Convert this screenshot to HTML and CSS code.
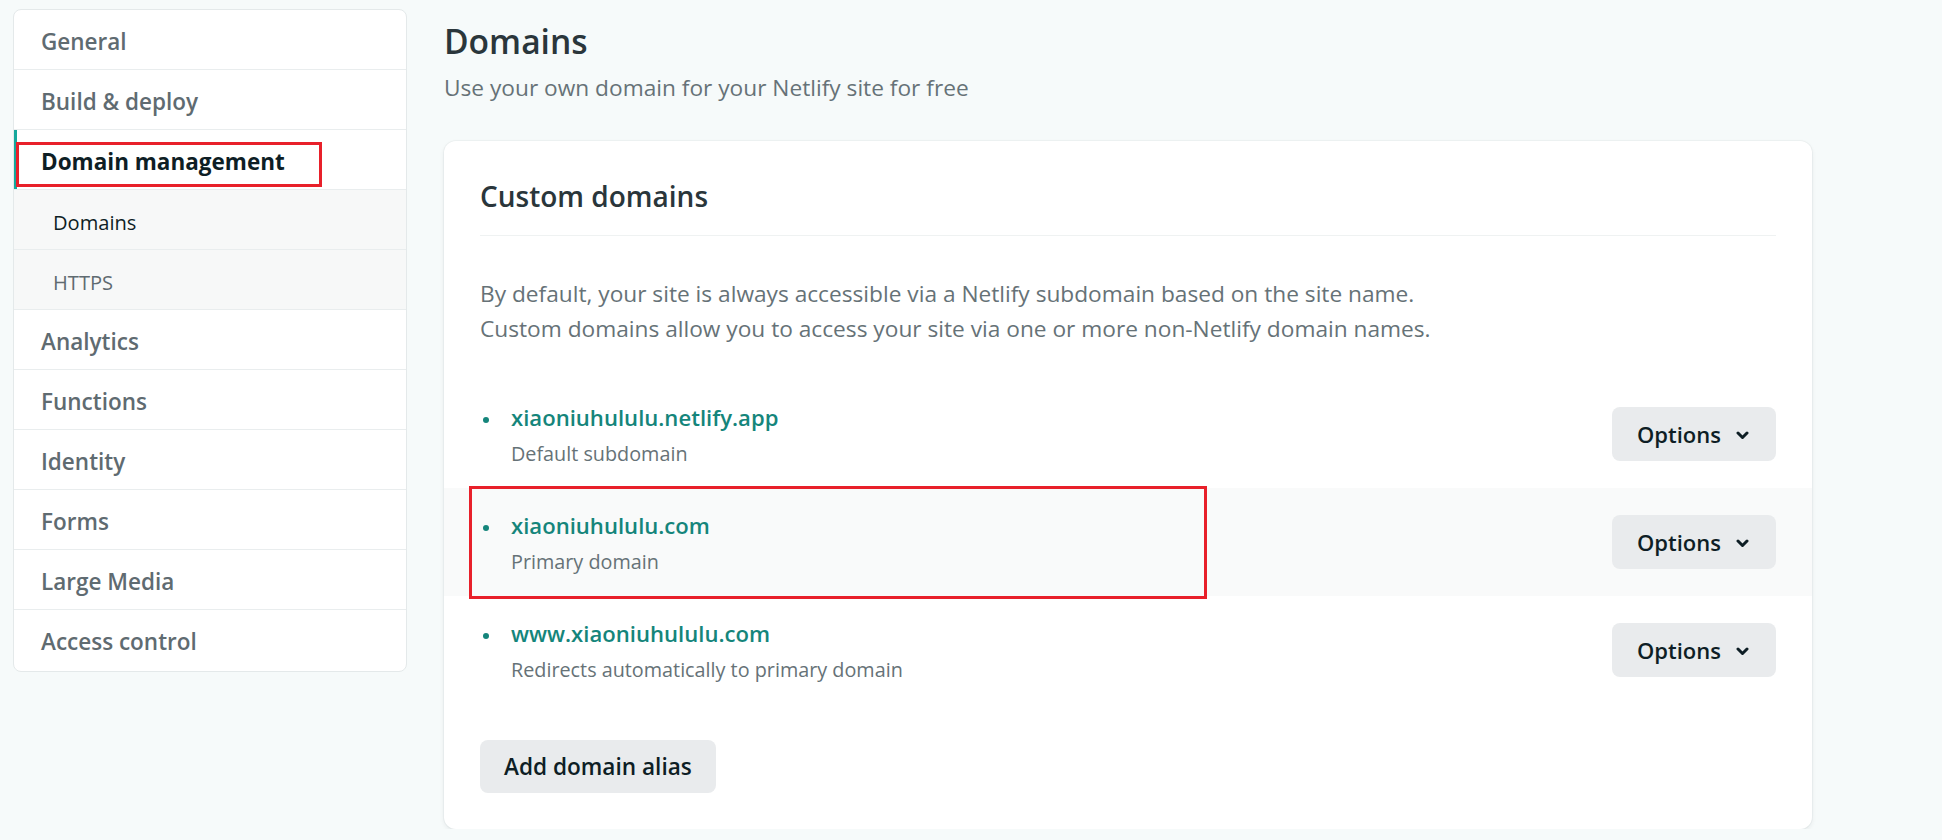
FILE: index.html
```html
<!DOCTYPE html>
<html lang="en">
<head>
<meta charset="utf-8">
<title>Domain management</title>
<link rel="stylesheet" href="styles.css">
</head>
<body>
<div class="page">
  <nav class="sidebar">
    <a class="nav-item">General</a>
    <a class="nav-item">Build &amp; deploy</a>
    <a class="nav-item active">Domain management<span class="mark mark-nav"></span></a>
    <a class="nav-item sub current">Domains</a>
    <a class="nav-item sub">HTTPS</a>
    <a class="nav-item">Analytics</a>
    <a class="nav-item">Functions</a>
    <a class="nav-item">Identity</a>
    <a class="nav-item">Forms</a>
    <a class="nav-item">Large Media</a>
    <a class="nav-item last">Access control</a>
  </nav>

  <main class="main">
    <h1 class="title">Domains</h1>
    <p class="subtitle">Use your own domain for your Netlify site for free</p>

    <section class="card">
      <h2 class="card-title">Custom domains</h2>
      <p class="card-desc">By default, your site is always accessible via a Netlify subdomain based on the site name.<br>Custom domains allow you to access your site via one or more non-Netlify domain names.</p>

      <ul class="domains">
        <li class="domain">
          <div class="domain-info">
            <span class="dot"></span>
            <div class="domain-text">
              <div class="domain-name">xiaoniuhululu.netlify.app</div>
              <div class="domain-note">Default subdomain</div>
            </div>
          </div>
          <button class="btn btn-options">Options <svg class="chev" width="13" height="9" viewBox="0 0 13 9"><path d="M2 2 L6.5 6.5 L11 2" fill="none" stroke="currentColor" stroke-width="3" stroke-linecap="round" stroke-linejoin="round"/></svg></button>
        </li>
        <li class="domain highlight">
          <div class="domain-info">
            <span class="dot"></span>
            <div class="domain-text">
              <div class="domain-name">xiaoniuhululu.com</div>
              <div class="domain-note">Primary domain</div>
            </div>
          </div>
          <button class="btn btn-options">Options <svg class="chev" width="13" height="9" viewBox="0 0 13 9"><path d="M2 2 L6.5 6.5 L11 2" fill="none" stroke="currentColor" stroke-width="3" stroke-linecap="round" stroke-linejoin="round"/></svg></button>
          <span class="mark mark-row"></span>
        </li>
        <li class="domain">
          <div class="domain-info">
            <span class="dot"></span>
            <div class="domain-text">
              <div class="domain-name">www.xiaoniuhululu.com</div>
              <div class="domain-note">Redirects automatically to primary domain</div>
            </div>
          </div>
          <button class="btn btn-options">Options <svg class="chev" width="13" height="9" viewBox="0 0 13 9"><path d="M2 2 L6.5 6.5 L11 2" fill="none" stroke="currentColor" stroke-width="3" stroke-linecap="round" stroke-linejoin="round"/></svg></button>
        </li>
      </ul>

      <button class="btn btn-add">Add domain alias</button>
    </section>
  </main>
</div>
</body>
</html>
```

FILE: styles.css
```css
* { box-sizing: border-box; }

html, body {
  margin: 0;
  padding: 0;
  background: #f6fafa;
  font-family: "Open Sans", "Noto Sans", "Liberation Sans", sans-serif;
  color: #2d3a40;
}

.page {
  display: flex;
  align-items: flex-start;
  padding: 9px 0 0 13px;
}

/* Sidebar */
.sidebar {
  width: 394px;
  flex: 0 0 394px;
  background: #fff;
  border: 1px solid #e4e9ea;
  border-radius: 8px;
  display: flex;
  flex-direction: column;
  overflow: hidden;
}

.nav-item {
  position: relative;
  display: flex;
  align-items: center;
  height: 60px;
  padding: 4px 0 0 27px;
  border-bottom: 1px solid #e9edee;
  font-size: 22.5px;
  font-weight: 600;
  color: #5f6b71;
  text-decoration: none;
}

.nav-item.active {
  color: #0e1e25;
  font-weight: 700;
  box-shadow: inset 3px 0 0 #15a89c;
}

.nav-item.sub {
  padding: 5px 0 0 39px;
  font-size: 20.1px;
  font-weight: 400;
  background: #f7f8f8;
  color: #5f6b71;
}

.nav-item.sub.current { color: #0e1e25; }

.nav-item.last { border-bottom: none; height: 61px; padding-top: 2px; }

/* Annotation boxes */
.mark {
  position: absolute;
  border: 3px solid #e8202a;
  pointer-events: none;
}

.mark-nav {
  left: 2px;
  top: 12px;
  width: 306px;
  height: 45px;
}

.mark-row {
  left: 25px;
  top: -2px;
  width: 738px;
  height: 113px;
}

/* Main */
.main {
  margin-left: 37px;
  width: 1368px;
  flex: 0 0 1368px;
}

.title {
  margin: 8px 0 0;
  font-size: 33.6px;
  line-height: 48px;
  font-weight: 600;
  color: #2a363b;
}

.subtitle {
  margin: 8px 0 0;
  font-size: 22.7px;
  line-height: 30px;
  color: #667277;
}

.card {
  margin-top: 38px;
  background: #fff;
  border-radius: 12px;
  box-shadow: 0 0 0 1px rgba(14, 30, 37, 0.03), 0 2px 5px rgba(14, 30, 37, 0.07);
  padding: 35px 36px 36px;
}

.card-title {
  margin: 0;
  padding-bottom: 19px;
  border-bottom: 1px solid #eff2f2;
  font-size: 28px;
  line-height: 40px;
  font-weight: 600;
  color: #2a363b;
}

.card-desc {
  margin: 40px 0 34px;
  font-size: 22.7px;
  line-height: 35px;
  color: #667277;
}

.domains {
  list-style: none;
  margin: 0 -36px;
  padding: 0;
}

.domain {
  position: relative;
  height: 108px;
  padding: 0 36px;
  display: flex;
  align-items: center;
  justify-content: space-between;
}

.domain.highlight { background: #f9fafa; }

.domain-info {
  display: flex;
  align-items: flex-start;
}

.dot {
  width: 6px;
  height: 6px;
  border-radius: 50%;
  background: #15857b;
  margin: 19px 22px 0 3px;
  flex: 0 0 6px;
}

.domain-text { padding-top: 2px; }

.domain-name {
  font-size: 22.1px;
  line-height: 34px;
  font-weight: 600;
  color: #15857b;
}

.domain-note {
  margin-top: 3px;
  font-size: 19.8px;
  line-height: 34px;
  color: #667277;
}

.btn {
  font-family: inherit;
  border: none;
  border-radius: 8px;
  background: #e9ebed;
  color: #0e1e25;
  font-weight: 600;
  cursor: pointer;
}

.btn-options {
  height: 54px;
  width: 164px;
  padding: 0 0 0 25px;
  display: flex;
  align-items: center;
  gap: 15px;
  font-size: 22px;
}

.chev { display: block; margin-top: 2px; }

.btn-add {
  margin-top: 36px;
  height: 53px;
  padding: 0 24px;
  font-size: 22.6px;
}
```
